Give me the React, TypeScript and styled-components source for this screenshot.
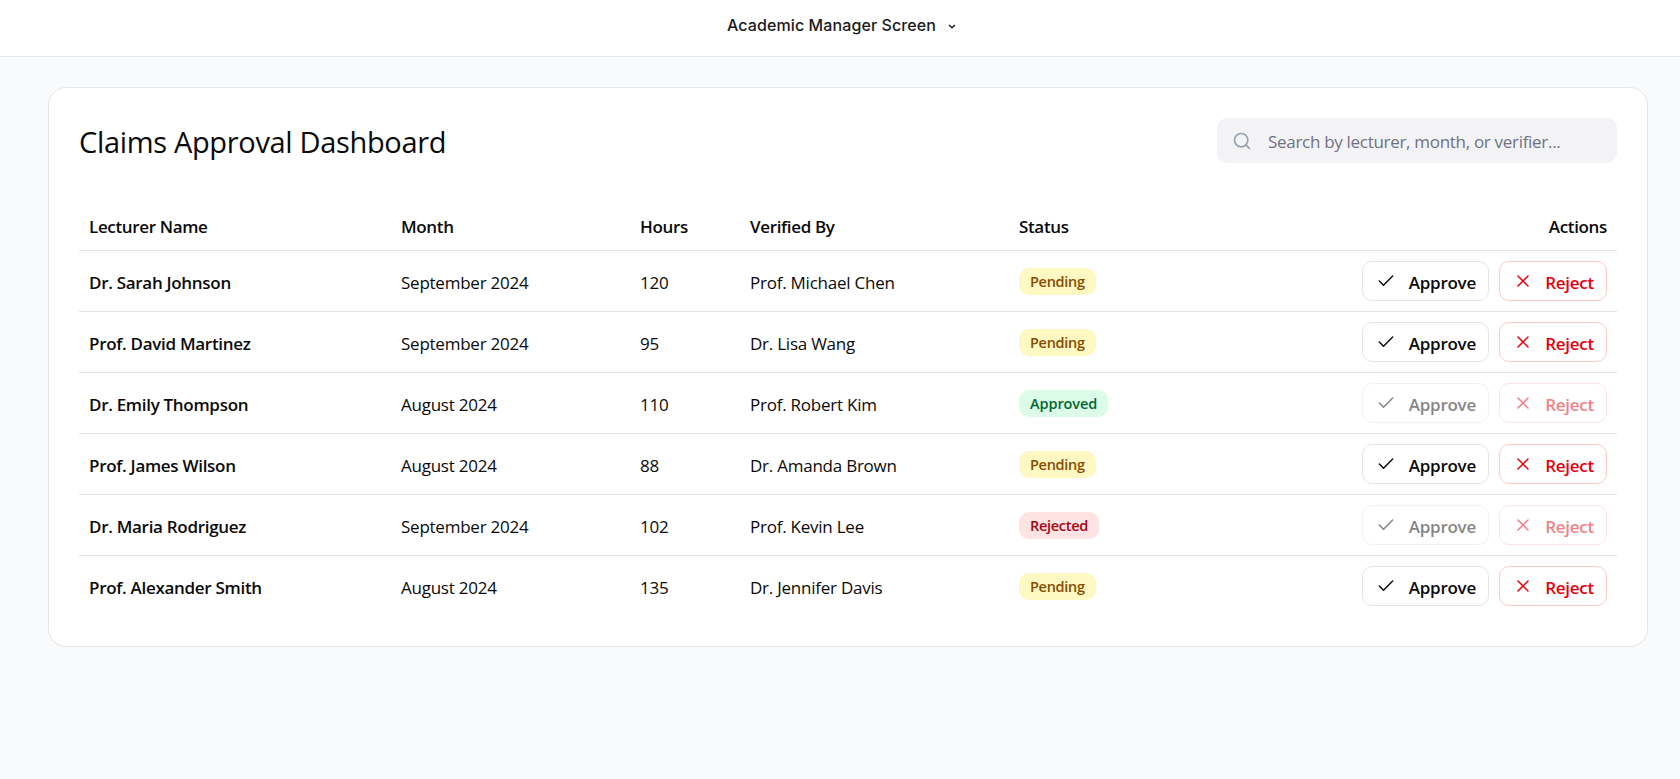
import React from "react";
import styled, { createGlobalStyle, css } from "styled-components";
import { Check, Search, X } from "lucide-react";

type Status = "Pending" | "Approved" | "Rejected";

interface Claim {
  lecturer: string;
  month: string;
  hours: number;
  verifier: string;
  status: Status;
}

const claims: Claim[] = [
  { lecturer: "Dr. Sarah Johnson", month: "September 2024", hours: 120, verifier: "Prof. Michael Chen", status: "Pending" },
  { lecturer: "Prof. David Martinez", month: "September 2024", hours: 95, verifier: "Dr. Lisa Wang", status: "Pending" },
  { lecturer: "Dr. Emily Thompson", month: "August 2024", hours: 110, verifier: "Prof. Robert Kim", status: "Approved" },
  { lecturer: "Prof. James Wilson", month: "August 2024", hours: 88, verifier: "Dr. Amanda Brown", status: "Pending" },
  { lecturer: "Dr. Maria Rodriguez", month: "September 2024", hours: 102, verifier: "Prof. Kevin Lee", status: "Rejected" },
  { lecturer: "Prof. Alexander Smith", month: "August 2024", hours: 135, verifier: "Dr. Jennifer Davis", status: "Pending" },
];

const badgeColors: Record<Status, { background: string; text: string }> = {
  Pending: { background: "#fef9c2", text: "#894b00" },
  Approved: { background: "#dcfce7", text: "#016630" },
  Rejected: { background: "#ffe2e2", text: "#9f0712" },
};

const GlobalStyle = createGlobalStyle`
  *, *::before, *::after { box-sizing: border-box; }
  body {
    margin: 0;
    background: #f9fafb;
    color: #0a0a0a;
    font-family: "Segoe UI", "Open Sans", "Noto Sans", sans-serif;
    font-size: 17px;
  }
  button, input { font: inherit; letter-spacing: inherit; }
`;

const Page = styled.div`
  min-height: 779px;
`;

const TopBar = styled.header`
  display: flex;
  justify-content: center;
  height: 57px;
  padding: 13px 0 0 3px;
  background: #fff;
  border-bottom: 1px solid #e5e5e5;
`;

const ScreenPicker = styled.div`
  display: flex;
  align-items: center;
  gap: 12px;
  height: 24px;
  color: #1a1a1a;
  font-family: Inter, sans-serif;
  font-size: 16px;
  font-weight: 500;
  letter-spacing: 0.1px;

  svg { margin-top: 3px; }
`;

const Card = styled.main`
  height: 560px;
  margin: 30px 32px 0 48px;
  padding: 30px;
  background: #fff;
  border: 1px solid #e5e5e5;
  border-radius: 18px;
`;

const CardHeader = styled.div`
  display: flex;
  align-items: center;
  justify-content: space-between;
  height: 45px;
  margin-bottom: 37px;
`;

const Title = styled.h1`
  margin: 2px 0 0;
  font-size: 29px;
  font-weight: 400;
  letter-spacing: -0.33px;
  line-height: 40px;
`;

const SearchField = styled.label`
  display: flex;
  align-items: center;
  gap: 16px;
  width: 400px;
  height: 45px;
  padding: 0 15px;
  background: #f3f3f5;
  border-radius: 10px;
  color: #99a1af;
`;

const SearchInput = styled.input`
  flex: 1;
  min-width: 0;
  padding: 2px 0 0;
  border: 0;
  outline: 0;
  background: transparent;
  letter-spacing: -0.3px;
  &::placeholder { color: #717182; opacity: 1; }
`;

const Table = styled.table`
  width: 100%;
  table-layout: fixed;
  border-collapse: separate;
  border-spacing: 0;
`;

const HeadCell = styled.th<{ $width: number; $align?: "right" }>`
  width: ${({ $width }) => $width}px;
  height: 51px;
  padding: 2px 10px 0;
  border-bottom: 1px solid #e5e5e5;
  font-weight: 600;
  letter-spacing: -0.35px;
  text-align: ${({ $align = "left" }) => $align};
`;

const Row = styled.tr`
  td { border-bottom: 1px solid #e5e5e5; }
  &:last-child td { border-bottom-color: transparent; }
`;

const Cell = styled.td<{ $strong?: boolean }>`
  height: 61px;
  padding: 2px 10px 0;
  letter-spacing: ${({ $strong }) => ($strong ? -0.3 : -0.24)}px;
  white-space: nowrap;
  font-weight: ${({ $strong }) => ($strong ? 600 : 400)};
`;

const PlainCell = styled(Cell)`
  padding-top: 0;
`;

const Badge = styled.span<{ $status: Status }>`
  display: flex;
  align-items: center;
  width: fit-content;
  height: 27px;
  padding: 0 11px;
  border-radius: 10px;
  font-size: 14.5px;
  font-weight: 600;
  letter-spacing: ${({ $status }) => ($status === "Approved" ? -0.08 : -0.3)}px;
  ${({ $status }) => css`
    background: ${badgeColors[$status].background};
    color: ${badgeColors[$status].text};
  `}
`;

const Actions = styled.div`
  display: flex;
  justify-content: flex-end;
  gap: 10px;
`;

const ActionButton = styled.button<{ $danger?: boolean }>`
  display: flex;
  align-items: center;
  justify-content: space-between;
  width: ${({ $danger }) => ($danger ? 108 : 127)}px;
  height: 40px;
  padding: 0 12px 0 13px;
  background: #fff;
  border: 1px solid ${({ $danger }) => ($danger ? "#ffc9c9" : "#e5e5e5")};
  border-radius: 10px;
  color: ${({ $danger }) => ($danger ? "#e7000b" : "#0a0a0a")};
  font-weight: 600;
  letter-spacing: -0.25px;
  &:disabled { opacity: 0.5; }
`;

const ButtonLabel = styled.span`
  padding-top: 2px;
`;

export default function App() {
  return (
    <Page>
      <GlobalStyle />
      <TopBar>
        <ScreenPicker>
          Academic Manager Screen
          <svg width="8" height="5" viewBox="0 0 8 5" fill="none" stroke="currentColor" strokeWidth="1.4">
            <path d="M1 0.9 4 3.7 7 0.9" />
          </svg>
        </ScreenPicker>
      </TopBar>
      <Card>
        <CardHeader>
          <Title>Claims Approval Dashboard</Title>
          <SearchField>
            <Search size={20} />
            <SearchInput placeholder="Search by lecturer, month, or verifier..." />
          </SearchField>
        </CardHeader>
        <Table>
          <thead>
            <tr>
              <HeadCell $width={312}>Lecturer Name</HeadCell>
              <HeadCell $width={239}>Month</HeadCell>
              <HeadCell $width={110}>Hours</HeadCell>
              <HeadCell $width={269}>Verified By</HeadCell>
              <HeadCell $width={160}>Status</HeadCell>
              <HeadCell $width={448} $align="right">Actions</HeadCell>
            </tr>
          </thead>
          <tbody>
            {claims.map((claim) => {
              const settled = claim.status !== "Pending";
              return (
                <Row key={claim.lecturer}>
                  <Cell $strong>{claim.lecturer}</Cell>
                  <Cell>{claim.month}</Cell>
                  <Cell>{claim.hours}</Cell>
                  <Cell>{claim.verifier}</Cell>
                  <PlainCell>
                    <Badge $status={claim.status}>{claim.status}</Badge>
                  </PlainCell>
                  <PlainCell>
                    <Actions>
                      <ActionButton disabled={settled}>
                        <Check size={20} strokeWidth={1.75} />
                        <ButtonLabel>Approve</ButtonLabel>
                      </ActionButton>
                      <ActionButton $danger disabled={settled}>
                        <X size={20} strokeWidth={1.75} />
                        <ButtonLabel>Reject</ButtonLabel>
                      </ActionButton>
                    </Actions>
                  </PlainCell>
                </Row>
              );
            })}
          </tbody>
        </Table>
      </Card>
    </Page>
  );
}
